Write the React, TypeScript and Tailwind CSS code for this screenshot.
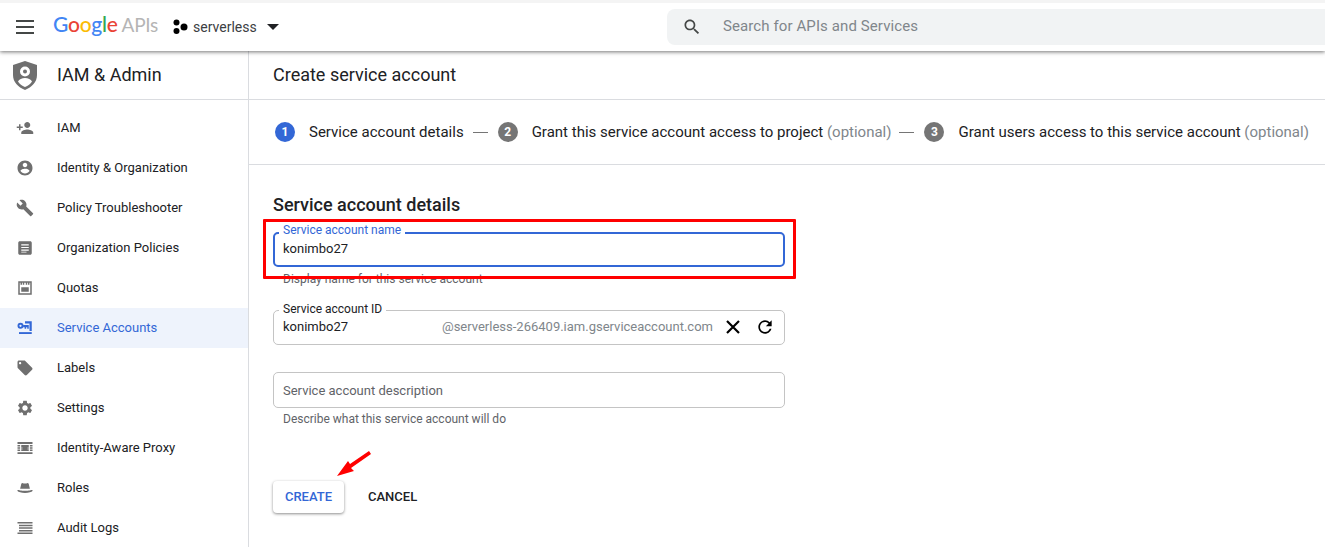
import type { ReactNode } from "react";

const Icon = ({ d }: { d: string }) => (
  <svg viewBox="0 0 24 24" className="w-[18px] h-[18px]" fill="currentColor" fillRule="evenodd">
    <path d={d} />
  </svg>
);

const navItems: { label: string; icon: ReactNode; active?: boolean }[] = [
  {
    label: "IAM",
    icon: <Icon d="M15 12c2.21 0 4-1.79 4-4s-1.79-4-4-4-4 1.79-4 4 1.79 4 4 4zm-9-2V7H4v3H1v2h3v3h2v-3h3v-2H6zm9 4c-2.67 0-8 1.34-8 4v2h16v-2c0-2.66-5.33-4-8-4z" />,
  },
  {
    label: "Identity & Organization",
    icon: <Icon d="M12 2C6.48 2 2 6.48 2 12s4.48 10 10 10 10-4.48 10-10S17.52 2 12 2zm0 3c1.66 0 3 1.34 3 3s-1.34 3-3 3-3-1.34-3-3 1.34-3 3-3zm0 14.2c-2.5 0-4.71-1.28-6-3.22.03-1.99 4-3.08 6-3.08 1.99 0 5.97 1.09 6 3.08-1.29 1.94-3.5 3.22-6 3.22z" />,
  },
  {
    label: "Policy Troubleshooter",
    icon: <Icon d="M22.7 19l-9.1-9.1c.9-2.3.4-5-1.5-6.9-2-2-5-2.4-7.4-1.3L9 6 6 9 1.6 4.7C.4 7.1.9 10.1 2.9 12.1c1.9 1.9 4.6 2.4 6.9 1.5l9.1 9.1c.4.4 1 .4 1.4 0l2.3-2.3c.5-.4.5-1.1.1-1.4z" />,
  },
  {
    label: "Organization Policies",
    icon: <Icon d="M19 3H5c-1.1 0-2 .9-2 2v14c0 1.1.9 2 2 2h14c1.1 0 2-.9 2-2V5c0-1.1-.9-2-2-2zM7 7h10v1.500H7V7zm0 3.500h10V12H7v-1.500zm0 3.500h10v1.500H7V14zm0 3h7v1H7v-1z" />,
  },
  {
    label: "Quotas",
    icon: <Icon d="M3 3h18v18H3V3zm2 2v14h14V5h-1v2.500h-2V5h-1v2.500h-2V5h-2v2.500H9V5H8v2.500H6V5H5zm2 6h10v6H7v-6z" />,
  },
  {
    label: "Service Accounts",
    active: true,
    icon: (
      <svg viewBox="0 0 24 24" className="w-[18px] h-[18px]" fill="currentColor" fillRule="evenodd">
        <path d="M12 3h9v13h-3V6h-6V3z" />
        <path d="M6 5a4 4 0 1 1 0 8 4 4 0 0 1 0-8zm0 2.500a1.500 1.500 0 1 0 0 3 1.500 1.500 0 0 0 0-3z" />
        <path d="M9.500 8H17v5h-2v-2h-1.500v2h-2v-2h-2V8z" />
        <path d="M4 17.500h17V20H4v-2.500z" />
      </svg>
    ),
  },
  {
    label: "Labels",
    icon: <Icon d="M21.41 11.58l-9-9C12.05 2.22 11.55 2 11 2H4c-1.1 0-2 .9-2 2v7c0 .55.22 1.05.59 1.42l9 9c.36.36.86.58 1.41.58.55 0 1.05-.22 1.41-.59l7-7c.37-.36.59-.86.59-1.41 0-.55-.23-1.06-.59-1.42zM5.5 7C4.67 7 4 6.33 4 5.5S4.67 4 5.5 4 7 4.67 7 5.5 6.33 7 5.5 7z" />,
  },
  {
    label: "Settings",
    icon: <Icon d="M19.14 12.94c.04-.3.06-.61.06-.94 0-.32-.02-.64-.07-.94l2.03-1.58c.18-.14.23-.41.12-.61l-1.92-3.32c-.12-.22-.37-.29-.59-.22l-2.39.96c-.5-.38-1.03-.7-1.62-.94l-.36-2.54c-.04-.24-.24-.41-.48-.41h-3.84c-.24 0-.43.17-.47.41l-.36 2.54c-.59.24-1.13.57-1.62.94l-2.39-.96c-.22-.08-.47 0-.59.22L2.74 8.87c-.12.21-.08.47.12.61l2.03 1.58c-.05.3-.09.63-.09.94s.02.64.07.94l-2.03 1.58c-.18.14-.23.41-.12.61l1.92 3.32c.12.22.37.29.59.22l2.39-.96c.5.38 1.03.7 1.62.94l.36 2.54c.05.24.24.41.48.41h3.84c.24 0 .44-.17.47-.41l.36-2.54c.59-.24 1.13-.56 1.62-.94l2.39.96c.22.08.47 0 .59-.22l1.92-3.32c.12-.22.07-.47-.12-.61l-2.01-1.58zM12 15.6c-1.98 0-3.6-1.62-3.6-3.6s1.62-3.6 3.6-3.6 3.6 1.62 3.6 3.6-1.62 3.6-3.6 3.6z" />,
  },
  {
    label: "Identity-Aware Proxy",
    icon: <Icon d="M2 4h20v2.500H2V4zm0 13.500h20V20H2v-2.500zM2 8h3.500v2H2V8zm16.500 0H22v2h-3.500V8zM2 14h3.500v2H2v-2zm16.500 0H22v2h-3.500v-2zM2 11h3.500v2H2v-2zm16.500 0H22v2h-3.500v-2zM7 8h10v2.500h-2V11h2v2h-2v.5h2V16H7v-2.500h2V13H7v-2h2v-.5H7V8z" />,
  },
  {
    label: "Roles",
    icon: <Icon d="M7 6.500C7.400 5.600 8.200 5.200 9 5.500c1 .4 2 .6 3 .6s2-.2 3-.6c.8-.3 1.600.1 2 1l1.500 6.500h-13L7 6.500zM2 14.500c2.500 0 4 1 10 1s7.500-1 10-1V16c-1 1.500-5 2.500-10 2.500S3 17.500 2 16v-1.500z" />,
  },
  {
    label: "Audit Logs",
    icon: <Icon d="M2 4h20v2H2V4zm2 3.500h18v2H4v-2zm0 3.500h18v2H4v-2zm0 3.500h18v2H4v-2zM2 18h20v2H2v-2z" />,
  },
];

const Step = ({ n, text, optional, active }: { n: number; text: string; optional?: boolean; active?: boolean }) => (
  <div className="flex items-center">
    <span
      className={`w-5 h-5 rounded-full flex items-center justify-center text-white text-[12px] font-bold ${active ? "bg-[#3367d6]" : "bg-[#757575]"}`}
    >
      {n}
    </span>
    <span className="ml-[14px] text-[15px] text-[#202124] whitespace-nowrap">
      {text}
      {optional && <span className="text-[#80868b]"> (optional)</span>}
    </span>
  </div>
);

export default function App() {
  return (
    <div className="relative w-[1325px] h-[547px] overflow-hidden bg-white font-['Roboto',sans-serif] text-[#202124]">
      {/* Top bar */}
      <header className="relative z-10 h-[51px] border-t-[3px] border-[#f4f4f4] bg-white shadow-[0_1px_4px_rgba(0,0,0,0.55)] flex items-center">
        <svg viewBox="0 0 18 14" className="w-[18px] h-[14px] ml-4 text-[#444746]" fill="currentColor">
          <path d="M0 0h18v2H0zM0 6h18v2H0zM0 12h18v2H0z" />
        </svg>
        <div className="w-[106px] ml-[19px] text-[21px] leading-7 tracking-[-0.3px] font-['Lato',sans-serif] font-medium flex items-baseline -mt-[5px]">
          <span className="text-[#4285f4]">G</span>
          <span className="text-[#ea4335]">o</span>
          <span className="text-[#fbbc05]">o</span>
          <span className="text-[#4285f4]">g</span>
          <span className="text-[#34a853]">l</span>
          <span className="text-[#ea4335]">e</span>
          <span className="ml-[4px] text-[19px] text-[#b5b5b5] font-normal">APIs</span>
        </div>
        <svg viewBox="0 0 16 16" className="w-4 h-4 ml-[13px] text-black" fill="currentColor">
          <circle cx="4.500" cy="3.500" r="3" />
          <circle cx="4.500" cy="12" r="3" />
          <circle cx="12" cy="8" r="3.500" />
        </svg>
        <span className="ml-[5px] text-[14px] text-[#3c4043] w-[64px]">serverless</span>
        <svg viewBox="0 0 12 6" className="w-[12px] h-[6px] ml-[10px] text-[#202124]" fill="currentColor">
          <path d="M0 0h12L6 6z" />
        </svg>
        <div className="ml-[388px] flex-1 h-[36px] bg-[#f1f3f4] rounded-l-lg flex items-center pl-[15px]">
          <svg viewBox="0 0 24 24" className="w-5 h-5 text-[#444746]" fill="currentColor">
            <path d="M15.500 14h-.79l-.28-.27C15.410 12.590 16 11.110 16 9.500 16 5.910 13.090 3 9.500 3S3 5.910 3 9.500 5.910 16 9.500 16c1.610 0 3.090-.59 4.230-1.570l.27.28v.79l5 4.990L20.490 19l-4.990-5zm-6 0C7.010 14 5 11.990 5 9.500S7.010 5 9.500 5 14 7.010 14 9.500 11.990 14 9.500 14z" />
          </svg>
          <span className="ml-[21px] text-[15px] tracking-[0.1px] -mt-[2px] text-[#80868b]">Search for APIs and Services</span>
        </div>
      </header>

      <div className="flex h-[496px]">
        {/* Sidebar */}
        <aside className="w-[249px] shrink-0 border-r border-[#dadce0] flex flex-col">
          <div className="h-[49px] shrink-0 border-b border-[#dadce0] flex items-center">
            <svg viewBox="0 0 24 29" className="w-[24px] h-[29px] ml-[13px] text-[#6f6f6f]" fill="currentColor" fillRule="evenodd">
              <path d="M12 0l12 4v10c0 7-5 12-12 15C5 26 0 21 0 14V4l12-4zm0 5.500a5 5 0 1 0 0 10 5 5 0 0 0 0-10zm0 3a2 2 0 1 1 0 4 2 2 0 0 1 0-4zM12 17c-3 0-6 1.500-7 3.500 1.500 2.500 4 4.500 7 5.500 3-1 5.500-3 7-5.500-1-2-4-3.500-7-3.500z" />
            </svg>
            <span className="ml-[20px] text-[18px] -mt-[2px]">IAM &amp; Admin</span>
          </div>
          <nav className="pt-2">
            {navItems.map((item) => (
              <div
                key={item.label}
                className={`h-10 flex items-center pl-[16px] text-[13px] ${item.active ? "bg-[#eef3fc] text-[#3367d6]" : "text-[#202124]"}`}
              >
                <span className={item.active ? "text-[#3367d6]" : "text-[#6f6f6f]"}>{item.icon}</span>
                <span className="ml-[23px]">{item.label}</span>
              </div>
            ))}
          </nav>
        </aside>

        {/* Main */}
        <main className="flex-1 min-w-0">
          <div className="h-[49px] border-b border-[#dadce0] flex items-center pl-6 pb-[2px] text-[18px]">Create service account</div>
          <div className="h-[65px] border-b border-[#dadce0] flex items-center pl-[26px]">
            <Step n={1} text="Service account details" active />
            <div className="w-[15px] h-px bg-[#757575] ml-[9px] mr-[10px]" />
            <Step n={2} text="Grant this service account access to project" optional />
            <div className="w-[15px] h-px bg-[#757575] ml-[8px] mr-[10px]" />
            <Step n={3} text="Grant users access to this service account" optional />
          </div>

          <div className="pl-6 pt-[28px] w-[536px]">
            <h2 className="text-[18px] leading-6 font-medium">Service account details</h2>

            <div className="relative mt-[15px] h-[35px] border-2 border-[#3367d6] rounded-[5px] flex items-center pl-2 pb-[2px] text-[13px]">
              <span className="absolute -top-[12px] left-[4px] bg-white px-1 text-[12px] leading-4 text-[#3367d6]">Service account name</span>
              konimbo27
            </div>
            <p className="mt-[4px] pl-[10px] text-[12px] leading-4 text-[#5f6368]">Display name for this service account</p>

            <div className="relative mt-[23px] h-[35px] border border-[#c4c4c4] rounded-[5px] flex items-center pl-[9px] pb-[2px] text-[13px]">
              <span className="absolute -top-[10px] left-[5px] bg-white px-1 text-[12px] leading-4 text-[#202124]">Service account ID</span>
              konimbo27
              <span className="ml-auto text-[#80868b]">@serverless-266409.iam.gserviceaccount.com</span>
              <svg viewBox="0 0 14 14" className="w-[14px] h-[14px] ml-[13px] text-black" fill="none" stroke="currentColor" strokeWidth="2.200">
                <path d="M1 1l12 12M13 1L1 13" />
              </svg>
              <svg viewBox="0 0 24 24" className="w-[20px] h-[20px] ml-[15px] mr-[9px] text-black" fill="currentColor">
                <path d="M17.650 6.350C16.200 4.900 14.210 4 12 4c-4.420 0-7.990 3.580-7.990 8s3.570 8 7.990 8c3.730 0 6.840-2.550 7.730-6h-2.080c-.82 2.330-3.040 4-5.650 4-3.310 0-6-2.690-6-6s2.690-6 6-6c1.660 0 3.140.69 4.220 1.780L13 11h7V4l-2.350 2.350z" />
              </svg>
            </div>

            <div className="mt-[27px] h-[36px] border border-[#c4c4c4] rounded-[5px] flex items-center pl-[9px] pt-[2px] text-[13px] text-[#5f6368]">
              Service account description
            </div>
            <p className="mt-[3px] pl-[10px] text-[12px] leading-4 text-[#5f6368]">Describe what this service account will do</p>

            <div className="mt-[54px] flex items-center">
              <button className="w-[71px] h-[32px] rounded bg-white text-[13px] font-medium text-[#3367d6] shadow-[0_1px_3px_rgba(0,0,0,0.45)]">CREATE</button>
              <button className="ml-[24px] text-[13px] font-medium text-[#202124]">CANCEL</button>
            </div>
          </div>
        </main>
      </div>

      {/* Annotations laid over the screenshot */}
      <div className="absolute left-[263px] top-[219px] w-[533px] h-[60px] border-[3px] border-[#ff0000] rounded-[1px] pointer-events-none" />
      <svg className="absolute left-[330px] top-[445px] w-[46px] h-[36px] pointer-events-none" viewBox="0 0 46 36" fill="#ff0000">
        <path d="M39 6L20 19l-2-3-11 15 17-5-3-3 20-14z" />
      </svg>
    </div>
  );
}
